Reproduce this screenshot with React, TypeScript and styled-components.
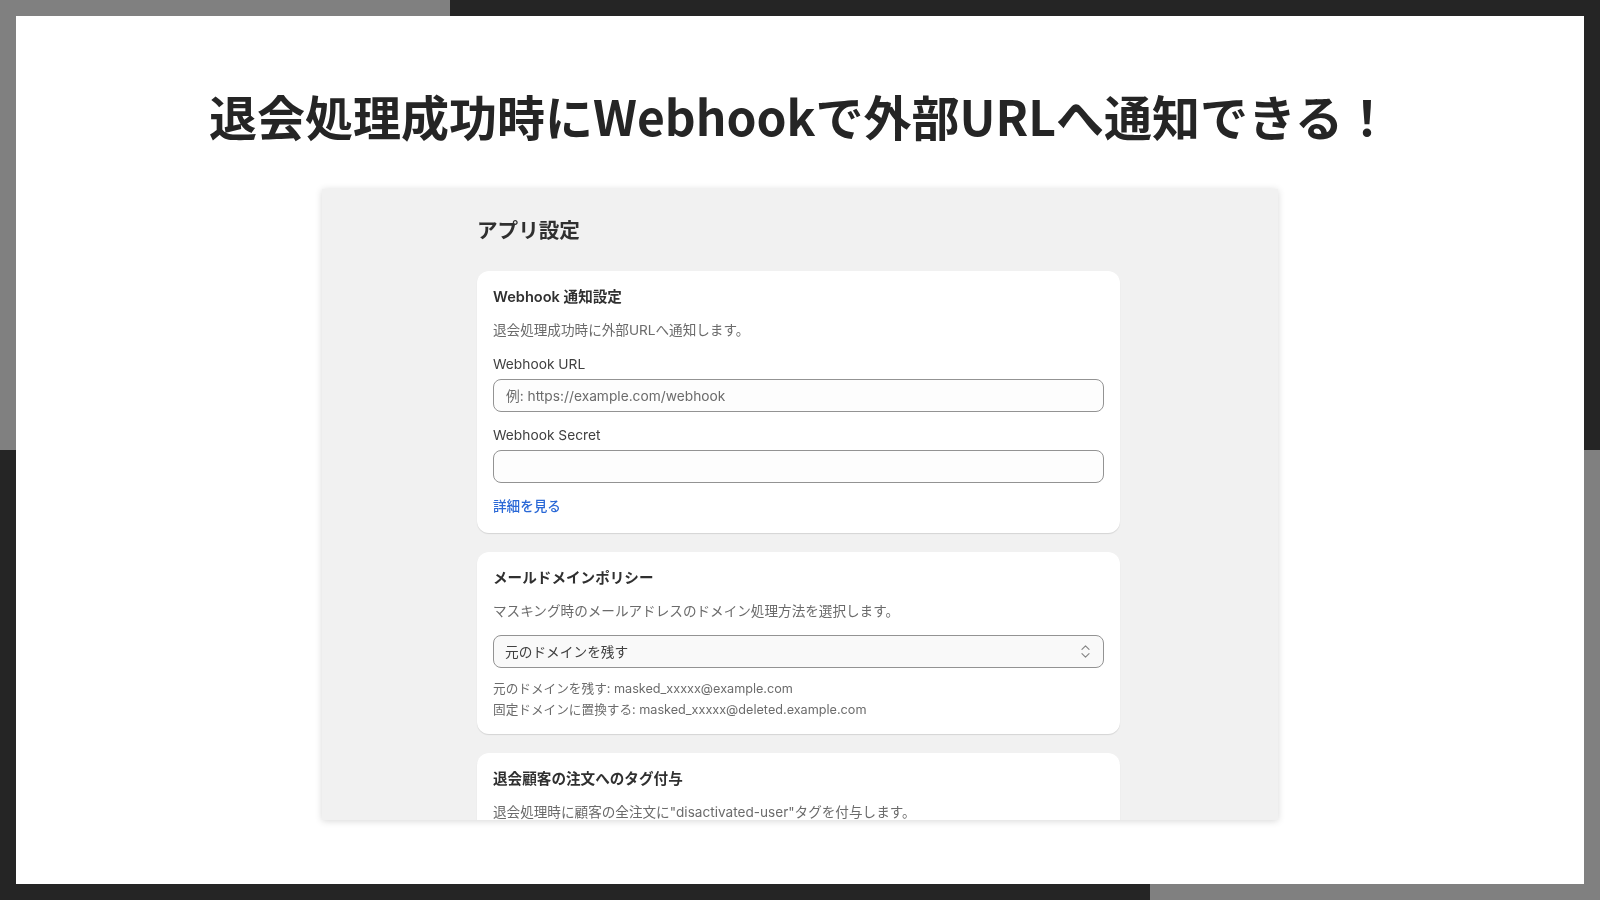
import { createGlobalStyle, styled } from "styled-components"
import { ChevronsUpDown } from "lucide-react"

const GlobalStyle = createGlobalStyle`
  html, body {
    margin: 0;
    padding: 0;
    height: 100%;
    overflow: hidden;
  }
  * {
    box-sizing: border-box;
  }
`

const UI_FONT = `Inter, "Noto Sans CJK JP", sans-serif`

const Page = styled.div`
  width: 1600px;
  height: 900px;
  padding: 16px;
  background:
    linear-gradient(#808080, #808080) 0 0 / 450px 450px no-repeat,
    linear-gradient(#808080, #808080) 100% 100% / 450px 450px no-repeat,
    #252525;
`

const Slide = styled.main`
  height: 100%;
  padding-top: 63px;
  background: #fff;
  display: flex;
  flex-direction: column;
  align-items: center;
`

const Heading = styled.h1`
  margin: 0 0 38px;
  font-family: "Noto Sans CJK JP", sans-serif;
  font-size: 48px;
  line-height: 72px;
  font-weight: 700;
  color: #252525;
  filter: blur(0.25px);
`

const Panel = styled.section`
  width: 956px;
  height: 631px;
  padding: 28px 158px 0 155px;
  background: #f1f1f1;
  box-shadow: 0 1px 7px rgba(0, 0, 0, 0.16);
  overflow: hidden;
  font-family: ${UI_FONT};
  display: flex;
  flex-direction: column;
  flex-shrink: 0;
  filter: blur(0.4px);
`

const PanelTitle = styled.h2`
  margin: 0 0 26px;
  font-size: 20.6px;
  line-height: 28px;
  font-weight: 700;
  color: #303030;
`

const Cards = styled.div`
  display: flex;
  flex-direction: column;
  gap: 19px;
`

const Card = styled.div<{ $bottom: number }>`
  padding: 16px 16px ${(p) => p.$bottom}px;
  background: #fff;
  border-radius: 12px;
  box-shadow: 0 1px 1px rgba(0, 0, 0, 0.12);
  display: flex;
  flex-direction: column;
`

const CardTitle = styled.h3`
  margin: 0 0 13px;
  font-size: 14.6px;
  line-height: 20px;
  font-weight: 600;
  color: #303030;
`

const Description = styled.p<{ $after: number }>`
  margin: 0 0 ${(p) => p.$after}px;
  font-size: 13.6px;
  line-height: 20px;
  color: #6b6b6b;
`

const Field = styled.label`
  display: flex;
  flex-direction: column;
  gap: 5px;
  margin-bottom: 13px;
  font-size: 13.75px;
  line-height: 20px;
  color: #404040;
`

const TextInput = styled.input`
  width: 100%;
  height: 33px;
  padding: 0 12px;
  border: 1px solid #939393;
  border-radius: 8px;
  background: #fdfdfd;
  font-family: inherit;
  font-size: 13.75px;
  color: #303030;
  outline: none;

  &::placeholder {
    color: #6b6b6b;
    opacity: 1;
  }
`

const DetailLink = styled.a`
  font-size: 13.6px;
  line-height: 20px;
  font-weight: 500;
  color: #2a68d6;
  text-decoration: none;
`

const SelectWrap = styled.div`
  position: relative;
  margin-bottom: 10px;
`

const Select = styled.select`
  width: 100%;
  height: 33px;
  padding: 0 32px 0 11px;
  appearance: none;
  border: 1px solid #939393;
  border-radius: 8px;
  background: #f9f9f9;
  font-family: inherit;
  font-size: 13.7px;
  color: #404040;
  outline: none;
`

const SelectIcon = styled(ChevronsUpDown)`
  position: absolute;
  top: 8px;
  right: 10px;
  color: #858585;
  pointer-events: none;
`

const Help = styled.p`
  margin: 0;
  font-size: 12.65px;
  line-height: 21px;
  color: #6b6b6b;
`

export default function App() {
  return (
    <>
      <GlobalStyle />
      <Page>
        <Slide>
          <Heading>退会処理成功時にWebhookで外部URLへ通知できる！</Heading>
          <Panel>
            <PanelTitle>アプリ設定</PanelTitle>
            <Cards>
              <Card $bottom={17}>
                <CardTitle>Webhook 通知設定</CardTitle>
                <Description $after={14}>退会処理成功時に外部URLへ通知します。</Description>
                <Field>
                  Webhook URL
                  <TextInput placeholder="例: https://example.com/webhook" />
                </Field>
                <Field>
                  Webhook Secret
                  <TextInput />
                </Field>
                <DetailLink href="#">詳細を見る</DetailLink>
              </Card>
              <Card $bottom={14}>
                <CardTitle>メールドメインポリシー</CardTitle>
                <Description $after={14}>マスキング時のメールアドレスのドメイン処理方法を選択します。</Description>
                <SelectWrap>
                  <Select defaultValue="keep">
                    <option value="keep">元のドメインを残す</option>
                    <option value="replace">固定ドメインに置換する</option>
                  </Select>
                  <SelectIcon size={17} strokeWidth={1.6} />
                </SelectWrap>
                <Help>元のドメインを残す: masked_xxxxx@example.com</Help>
                <Help>固定ドメインに置換する: masked_xxxxx@deleted.example.com</Help>
              </Card>
              <Card $bottom={0}>
                <CardTitle>退会顧客の注文へのタグ付与</CardTitle>
                <Description $after={12}>退会処理時に顧客の全注文に"disactivated-user"タグを付与します。</Description>
              </Card>
            </Cards>
          </Panel>
        </Slide>
      </Page>
    </>
  )
}
